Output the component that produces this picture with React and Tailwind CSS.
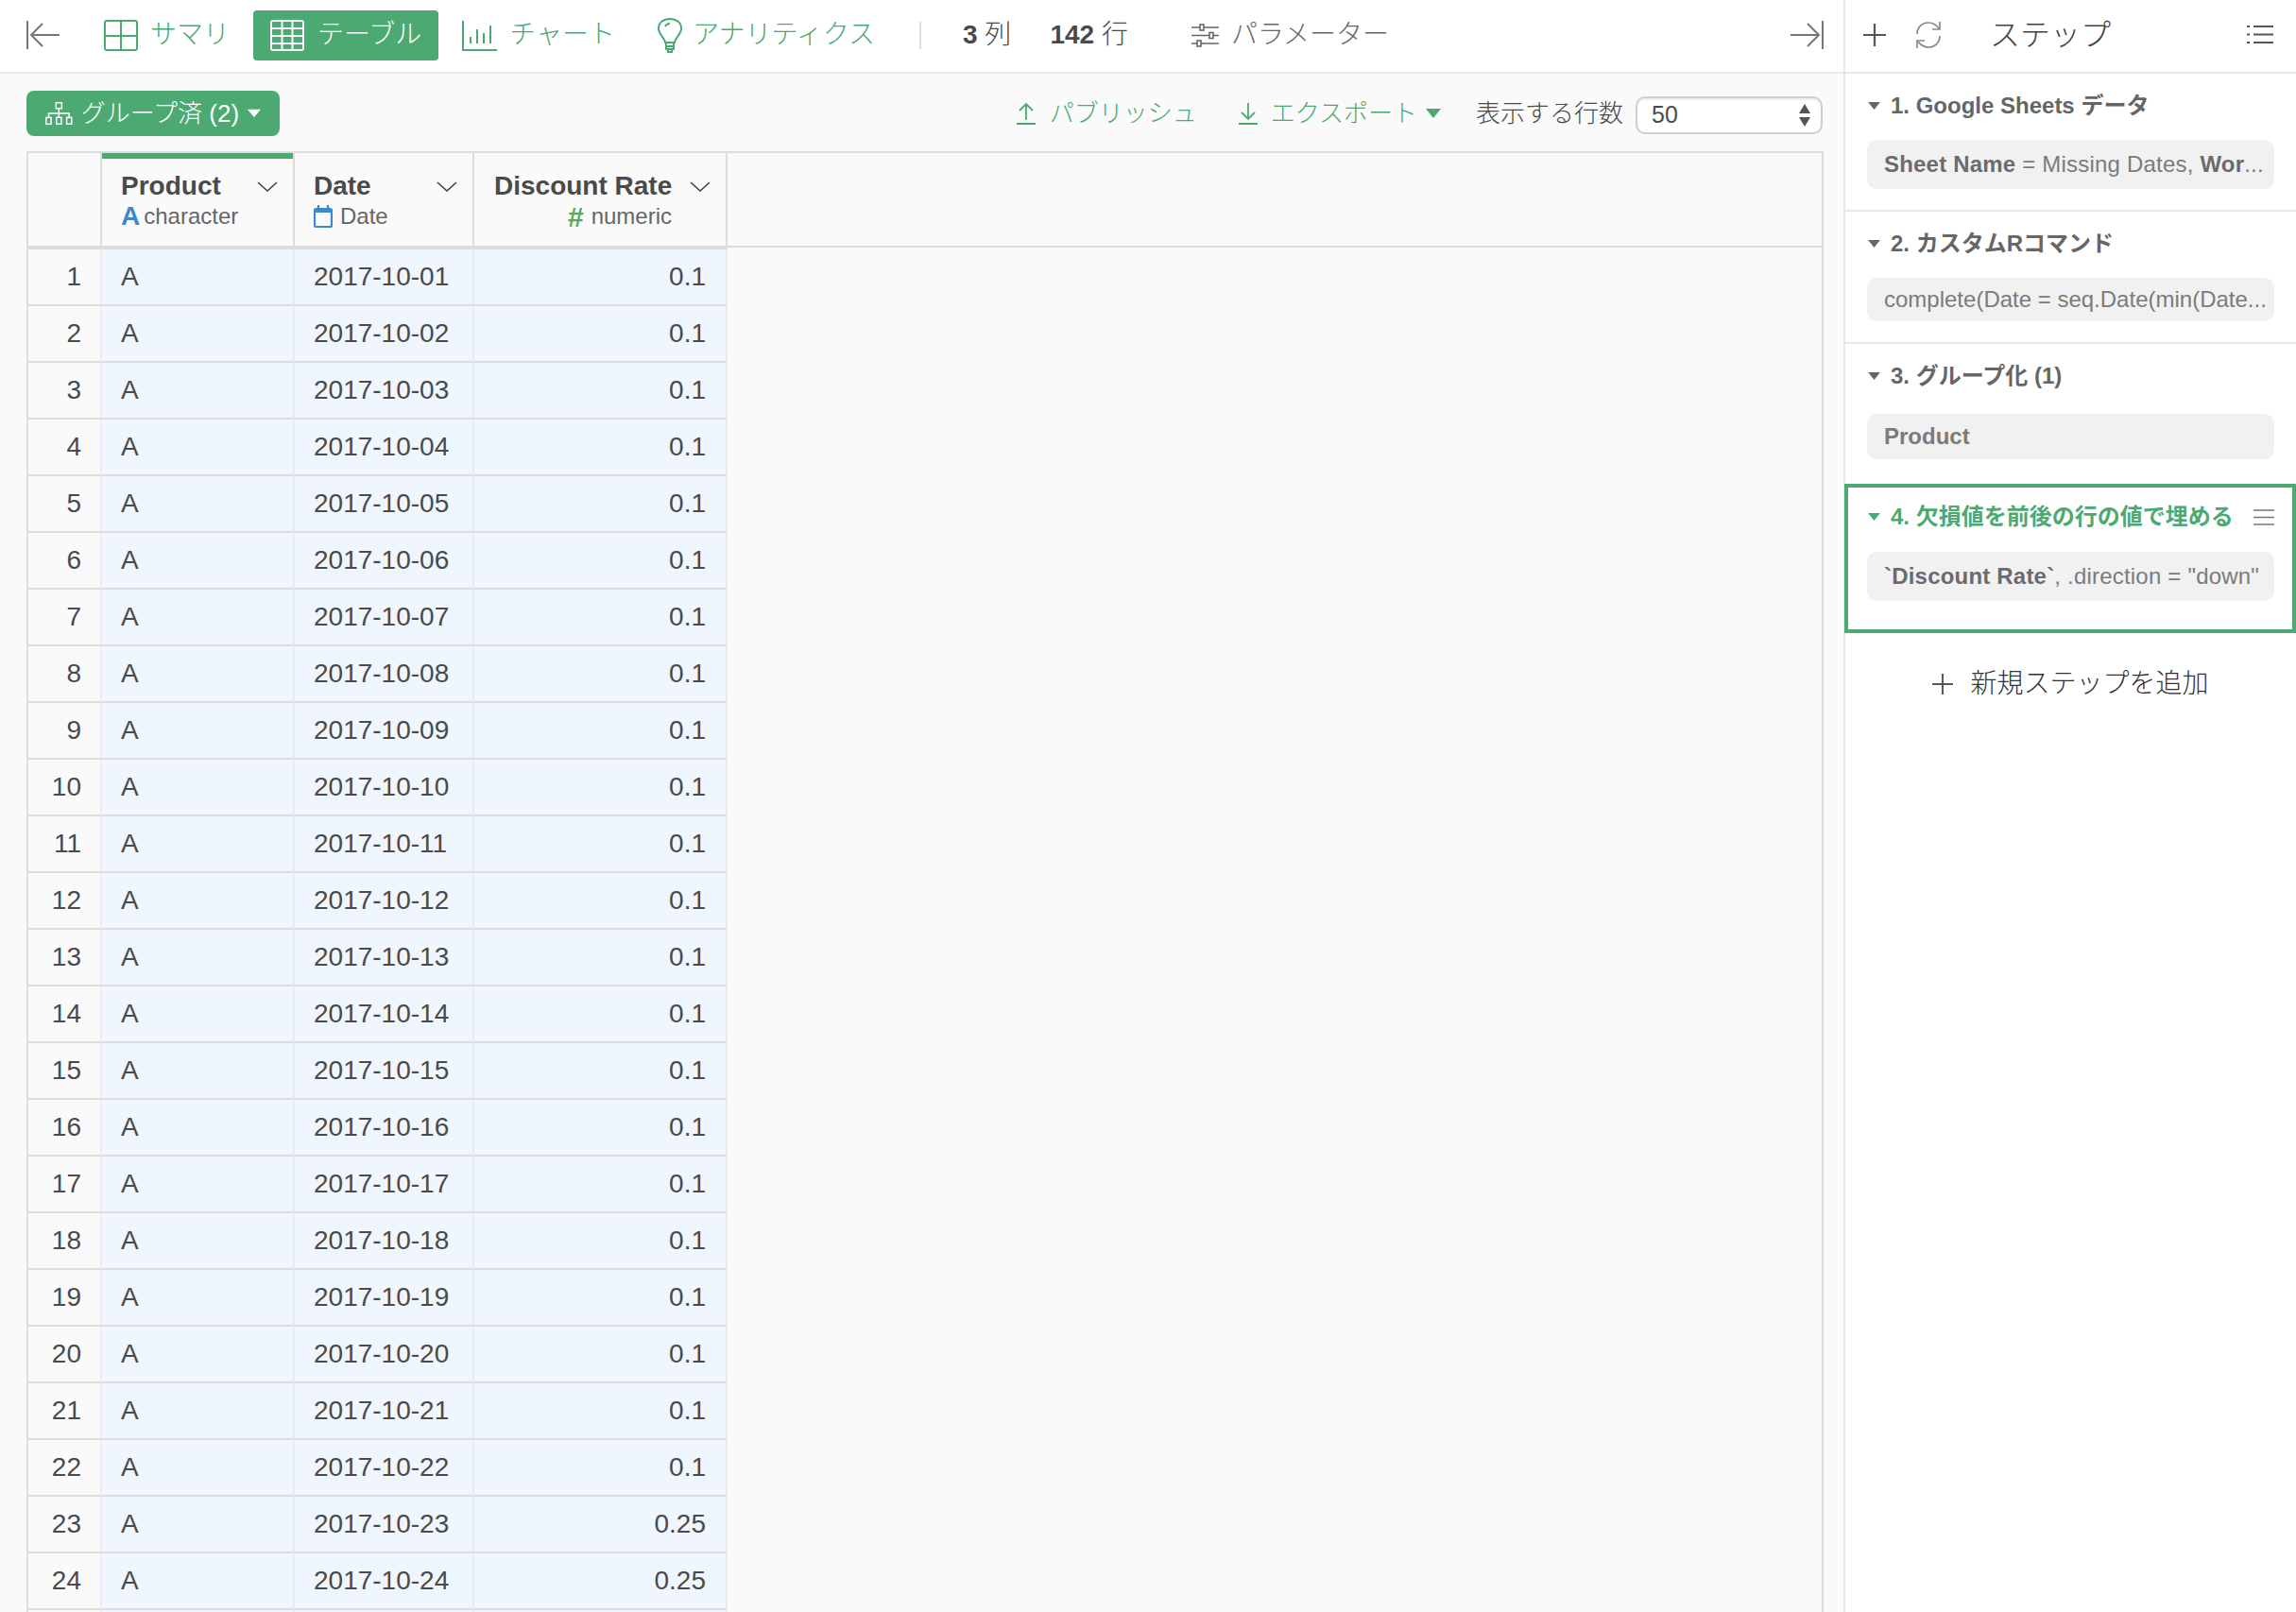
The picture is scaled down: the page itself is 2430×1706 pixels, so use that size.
const GREEN = '#4ca972';

const rows = Array.from({ length: 24 }, (_, i) => ({
  n: i + 1,
  date: `2017-10-${String(i + 1).padStart(2, '0')}`,
  rate: i >= 22 ? '0.25' : '0.1',
}));

const Caret = ({ color = GREEN, className = 'w-[16px] h-[10px]' }) => (
  <svg viewBox="0 0 16 10" className={className}><path d="M0 0h16L8 10z" fill={color} /></svg>
);

const Chevron = () => (
  <svg viewBox="0 0 22 11" className="w-[22px] h-[11px] shrink-0" fill="none" stroke="#444" strokeWidth="1.6"><path d="M1 1l10 9 10-9" /></svg>
);

const SummaryIcon = () => (
  <svg viewBox="0 0 36 33" className="w-[36px] h-[33px]" fill="none" stroke={GREEN} strokeWidth="2">
    <rect x="1" y="1" width="34" height="31" rx="2" /><path d="M18 1v31M1 17h34" />
  </svg>
);

const TableIcon = () => (
  <svg viewBox="0 0 36 33" className="w-[36px] h-[33px]" fill="none" stroke="#fff" strokeWidth="2">
    <rect x="1" y="1" width="34" height="31" rx="2" /><path d="M12.5 1v31M23.5 1v31M1 9h34M1 17h34M1 25h34" />
  </svg>
);

const ChartIcon = () => (
  <svg viewBox="0 0 37 33" className="w-[37px] h-[33px]" fill="none" stroke={GREEN} strokeWidth="2">
    <path d="M1 1v31h36M9 25v-7M16 25V10M23 25v-11M30 25V6" />
  </svg>
);

const BulbIcon = () => (
  <svg viewBox="0 0 26 37" className="w-[26px] h-[37px]" fill="none" stroke={GREEN} strokeWidth="2">
    <path d="M8 26c0-5-7-8-7-15C1 5 6 1 13 1s12 4 12 10c0 7-7 10-7 15z" />
    <path d="M8 9c1-2 3-3 5-3M9 26v7h8v-7M9 30h8M11 33v3h4v-3" />
  </svg>
);

const SlidersIcon = () => (
  <svg viewBox="0 0 29 25" className="w-[29px] h-[25px]" fill="#fff" stroke="#666" strokeWidth="1.6">
    <path d="M0 4h29M0 12.500h29M0 21h29" />
    <rect x="9" y="1" width="4" height="6" /><rect x="19" y="9.500" width="4" height="6" /><rect x="6" y="18" width="4" height="6" />
  </svg>
);

const GroupIcon = () => (
  <svg viewBox="0 0 33 28" className="w-[33px] h-[28px]" fill="none" stroke="#fff" strokeWidth="1.7">
    <rect x="13" y="1" width="7" height="7" /><path d="M16.500 8v6M4 19v-5h25v5M16.500 14v5" />
    <rect x="1" y="19" width="6" height="8" /><rect x="13.500" y="19" width="6" height="8" /><rect x="26" y="19" width="6" height="8" />
  </svg>
);

const ArrowLine = ({ flip }) => (
  <svg viewBox="0 0 36 30" className={flip ? 'w-[36px] h-[30px] -scale-x-100' : 'w-[36px] h-[30px]'} fill="none" stroke="#777" strokeWidth="2">
    <path d="M1 0v30M35 15H6M17 3L5 15l12 12" />
  </svg>
);

const UpDownIcon = ({ up }) => (
  <svg viewBox="0 0 20 24" className="w-[20px] h-[24px]" fill="none" stroke={GREEN} strokeWidth="1.8">
    {up ? <path d="M10 19V2M3 9l7-7 7 7M0 23h20" /> : <path d="M10 1v17M3 11l7 7 7-7M0 23h20" />}
  </svg>
);

const PlusIcon = ({ size = 'w-[24px] h-[24px]' }) => (
  <svg viewBox="0 0 24 24" className={size} fill="none" stroke="#555" strokeWidth="2.200"><path d="M12 0v24M0 12h24" /></svg>
);

const RefreshIcon = () => (
  <svg viewBox="0 0 30 30" className="w-[30px] h-[30px]" fill="none" stroke="#888" strokeWidth="1.700">
    <path d="M3 14C3 7 8 2 15 2c5 0 8 2 11 6M27 16c0 7-5 12-12 12-5 0-8-2-11-6" />
    <path d="M27 1v8h-8M3 29v-8h8" />
  </svg>
);

const ListIcon = () => (
  <svg viewBox="0 0 28 21" className="w-[28px] h-[21px]" fill="none" stroke="#555" strokeWidth="1.800">
    <path d="M7 2h21M7 10.500h21M7 19h21M0 2h3M0 10.500h3M0 19h3" />
  </svg>
);

const CalendarIcon = () => (
  <svg viewBox="0 0 20 24" className="w-[20px] h-[24px]" fill="none" stroke="#3d87ce" strokeWidth="2.200">
    <rect x="1" y="4" width="18" height="19" rx="1.500" /><path d="M1 6h18" strokeWidth="4" /><path d="M5 0v4M15 0v4" />
  </svg>
);

const HeaderCell = ({ border, children, active }) => (
  <div className={`relative h-[102px] border-b-4 border-[#dcdcdc] pt-[20px] ${border}`}>
    {active && <div className="absolute left-0 right-0 top-0 h-[6px] bg-[#4ca972]" />}
    {children}
  </div>
);

const Tab = ({ icon, label, active, className }) => (
  <div className={`flex items-center ${active ? 'h-[53px] bg-[#4ca972] rounded-[4px] text-white px-[18px]' : 'text-[#4ca972]'} ${className}`}>
    {icon}
    <span className="text-[28px] font-light whitespace-nowrap">{label}</span>
  </div>
);

const StepTitle = ({ children, color = '#666' }) => (
  <div className="flex items-center gap-[10px] h-[34px] text-[24px] font-bold whitespace-nowrap" style={{ color }}>
    <Caret color={color} className="w-[15px] h-[8px] shrink-0" />
    {children}
  </div>
);

const Chip = ({ className, children }) => (
  <div className={`flex items-center rounded-[10px] bg-[#f1f1f1] pl-[18px] text-[24px] text-[#7b7b7b] whitespace-nowrap ${className}`}>{children}</div>
);

export default function App() {
  return (
    <div className="flex w-[2430px] h-[1706px] overflow-hidden bg-white text-[#4a4a4a] font-['Liberation_Sans','Noto_Sans_CJK_JP',sans-serif]">
      <div className="w-[1951px] shrink-0 flex flex-col">
        <div className="flex items-center h-[78px] shrink-0 border-b-2 border-[#e8e8e8] pl-[28px] pr-[21px] pb-[2px]">
          <ArrowLine />
          <Tab icon={<SummaryIcon />} label="サマリ" className="ml-[46px] gap-[13px]" />
          <Tab icon={<TableIcon />} label="テーブル" active className="ml-[25px] gap-[14px]" />
          <Tab icon={<ChartIcon />} label="チャート" className="ml-[25px] gap-[13px]" />
          <Tab icon={<BulbIcon />} label="アナリティクス" className="ml-[45px] gap-[11px]" />
          <div className="ml-[47px] w-[2px] h-[29px] bg-[#ddd]" />
          <div className="ml-[44px] text-[28px] whitespace-nowrap"><b>3</b> <span className="font-light">列</span></div>
          <div className="ml-[41px] text-[28px] whitespace-nowrap"><b>142</b> <span className="font-light">行</span></div>
          <div className="ml-[67px] flex items-center gap-[13px] text-[#666]">
            <SlidersIcon />
            <span className="text-[28px] font-light whitespace-nowrap">パラメーター</span>
          </div>
          <div className="ml-auto"><ArrowLine flip /></div>
        </div>

        <div className="flex-1 flex flex-col bg-[#fafafa] min-h-0">
          <div className="flex items-center h-[82px] shrink-0 pl-[28px] pr-[22px] pt-[2px]">
            <div className="flex items-center gap-[9px] h-[48px] w-[268px] px-[20px] rounded-[8px] bg-[#4ca972] text-white text-[26px] font-light whitespace-nowrap">
              <GroupIcon />
              <span>グループ済 (2)</span>
              <Caret color="#fff" />
            </div>
            <div className="ml-auto flex items-center gap-[15px] text-[#4ca972]">
              <UpDownIcon up />
              <span className="text-[26px] font-light whitespace-nowrap">パブリッシュ</span>
            </div>
            <div className="ml-[44px] flex items-center gap-[14px] text-[#4ca972]">
              <UpDownIcon />
              <span className="text-[26px] font-light whitespace-nowrap">エクスポート</span>
              <Caret className="w-[16px] h-[10px] -ml-[5px]" />
            </div>
            <span className="ml-[37px] text-[26px] font-light whitespace-nowrap">表示する行数</span>
            <div className="ml-[13px] mt-[4px] flex items-center justify-between w-[198px] h-[40px] rounded-[10px] border-2 border-[#cfcfcf] bg-white shadow-[inset_0_2px_2px_#eee] pl-[15px] pr-[11px] text-[25px]">
              50
              <svg viewBox="0 0 12 24" className="w-[12px] h-[24px]"><path d="M6 0l6 10H0zM6 24L0 14h12z" fill="#555" /></svg>
            </div>
          </div>

          <div className="flex-1 min-h-0 ml-[28px] mr-[21px] border-x-2 border-t-2 border-[#dcdcdc] overflow-hidden">
            <div className="flex h-[102px]">
              <div className="w-[78px] h-[102px] border-b-4 border-r-2 border-[#dcdcdc]" />
              <HeaderCell active border="w-[204px] border-r-2 pl-[20px] pr-[16px]">
                <div className="flex items-center justify-between h-[30px] text-[28px] font-bold">Product<Chevron /></div>
                <div className="flex items-center gap-[4px] mt-[1px] h-[32px] text-[24px] text-[#666]">
                  <span className="text-[28px] font-bold text-[#3d87ce]">A</span>character
                </div>
              </HeaderCell>
              <HeaderCell border="w-[190px] border-r-2 pl-[20px] pr-[16px]">
                <div className="flex items-center justify-between h-[30px] text-[28px] font-bold">Date<Chevron /></div>
                <div className="flex items-center gap-[8px] mt-[1px] h-[32px] text-[24px] text-[#666]"><CalendarIcon />Date</div>
              </HeaderCell>
              <HeaderCell border="w-[268px] border-r-2 pl-[21px] pr-[16px]">
                <div className="flex items-center justify-between h-[30px] text-[28px] font-bold">Discount Rate<Chevron /></div>
                <div className="flex items-center justify-end gap-[8px] mt-[1px] mr-[41px] h-[32px] text-[24px] text-[#666]">
                  <span className="text-[30px] font-bold text-[#5aa85a]">#</span>numeric
                </div>
              </HeaderCell>
              <div className="flex-1 h-[100px] border-b-2 border-[#dcdcdc]" />
            </div>
            {rows.map((r) => (
              <div key={r.n} className="flex h-[60px] text-[28px]">
                <div className="flex items-center justify-end w-[78px] pr-[20px] border-b-2 border-r-2 border-r-[#ececec] border-b-[#dcdcdc]">{r.n}</div>
                <div className="flex items-center w-[204px] pl-[20px] bg-[#eff6fe] border-b-2 border-r-2 border-r-[#e8ecef] border-b-[#dcdcdc]">A</div>
                <div className="flex items-center w-[190px] pl-[20px] bg-[#eff6fe] border-b-2 border-r-2 border-r-[#e8ecef] border-b-[#dcdcdc]">{r.date}</div>
                <div className="flex items-center justify-end w-[268px] pr-[21px] bg-[#eff6fe] border-b-2 border-r-2 border-r-[#e8ecef] border-b-[#dcdcdc]">{r.rate}</div>
              </div>
            ))}
            <div className="flex h-[60px]">
              <div className="w-[78px] border-r-2 border-[#ececec]" />
              <div className="w-[204px] bg-[#eff6fe] border-r-2 border-[#e8ecef]" />
              <div className="w-[190px] bg-[#eff6fe] border-r-2 border-[#e8ecef]" />
              <div className="w-[268px] bg-[#eff6fe] border-r-2 border-[#e8ecef]" />
            </div>
          </div>
        </div>
      </div>

      <div className="flex-1 flex flex-col border-l-2 border-[#e8e8e8]">
        <div className="flex items-center h-[78px] shrink-0 border-b-2 border-[#e8e8e8] pl-[19px] pr-[24px] pb-[3px]">
          <PlusIcon />
          <div className="ml-[30px]"><RefreshIcon /></div>
          <span className="ml-[50px] text-[32px] font-light text-[#444] whitespace-nowrap">ステップ</span>
          <div className="ml-auto"><ListIcon /></div>
        </div>

        <div className="h-[146px] border-b-2 border-[#e8e8e8] px-[23px] pt-[17px]">
          <StepTitle>1. Google Sheets データ</StepTitle>
          <Chip className="mt-[19px] h-[52px] tracking-[0.2px]"><b className="text-[#6b6b6b]">Sheet Name</b>&nbsp;= Missing Dates,&nbsp;<b className="text-[#6b6b6b]">Wor</b>...</Chip>
        </div>
        <div className="h-[140px] border-b-2 border-[#e8e8e8] px-[23px] pt-[17px]">
          <StepTitle>2. カスタムRコマンド</StepTitle>
          <Chip className="mt-[19px] h-[46px]">complete(Date = seq.Date(min(Date...</Chip>
        </div>
        <div className="h-[148px] px-[23px] pt-[17px]">
          <StepTitle>3. グループ化 (1)</StepTitle>
          <Chip className="mt-[23px] h-[48px]"><b className="text-[#7b7b7b]">Product</b></Chip>
        </div>
        <div className="h-[158px] -ml-[1px] border-4 border-[#4ca972] pl-[20px] pr-[19px] pt-[14px]">
          <div className="flex items-center justify-between">
            <StepTitle color={GREEN}>4. 欠損値を前後の行の値で埋める</StepTitle>
            <svg viewBox="0 0 22 17" className="w-[22px] h-[17px]" fill="none" stroke="#777" strokeWidth="1.500"><path d="M0 1h22M0 8.500h22M0 16h22" /></svg>
          </div>
          <Chip className="mt-[20px] h-[52px] tracking-[0.2px]"><b className="text-[#6b6b6b]">`Discount Rate`</b>, .direction = "down"</Chip>
        </div>
        <div className="flex items-center justify-center gap-[18px] h-[108px] text-[28px] font-light text-[#333]">
          <PlusIcon size="w-[22px] h-[22px]" />
          <span className="whitespace-nowrap">新規ステップを追加</span>
        </div>
      </div>
    </div>
  );
}
